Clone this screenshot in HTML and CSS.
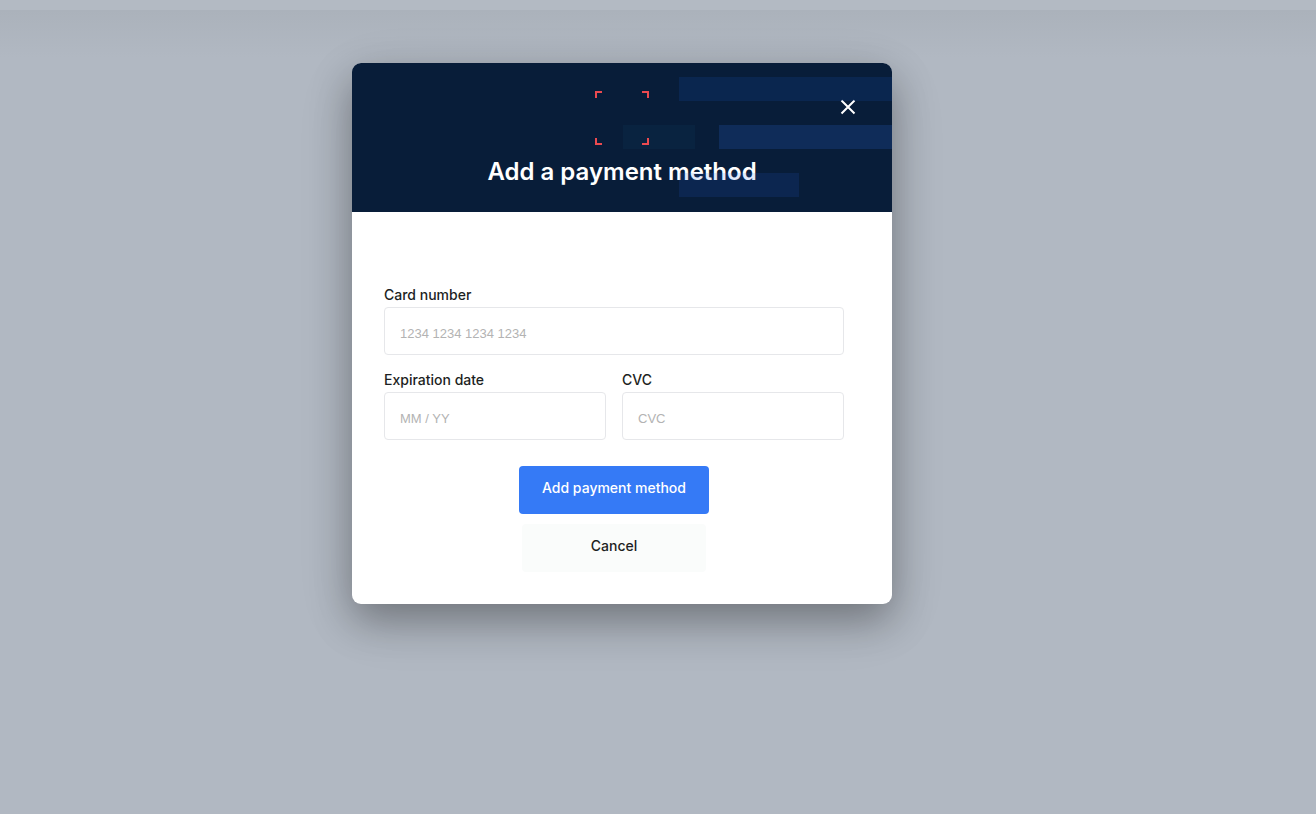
FILE: index.html
```html
<!DOCTYPE html>
<html lang="en">
<head>
  <meta charset="UTF-8" />
  <meta name="viewport" content="width=device-width, initial-scale=1.0"/>
  <title>Add a payment method</title>
  <link rel="stylesheet" href="styles.css">
</head>
<body>

  <div class="topbar"></div>

  <main class="page">
    <section class="modal" role="dialog" aria-labelledby="modalTitle">
      <header class="modal-header">
        <button type="button" class="close" aria-label="Close">
          <svg width="16" height="16" viewBox="0 0 16 16" fill="none" stroke="#ffffff" stroke-width="2">
            <path d="M1.5 1.5 14.5 14.5M14.5 1.5 1.5 14.5" />
          </svg>
        </button>
        <h2 id="modalTitle">Add a payment method</h2>

        <!-- Header artwork -->
        <svg class="artwork" width="297" height="149" viewBox="0 0 297 149" aria-hidden="true">
          <rect x="84" y="14" width="213" height="24" fill="#1650b0" fill-opacity="0.19" />
          <rect x="28" y="62" width="72" height="24" fill="#105a80" fill-opacity="0.11" />
          <rect x="124" y="62" width="173" height="24" fill="#2454b0" fill-opacity="0.27" />
          <rect x="84" y="110" width="120" height="24" fill="#2a64e0" fill-opacity="0.14" />
          <g fill="none" stroke="#ea4a50" stroke-width="2">
            <path d="M1 35V29H7" />
            <path d="M47 29H53V35" />
            <path d="M1 75V81H7" />
            <path d="M47 81H53V75" />
          </g>
        </svg>
      </header>

      <form class="payment-form">
        <div class="form-group">
          <label for="card">Card number</label>
          <input type="text" id="card" placeholder="1234 1234 1234 1234" />
        </div>

        <div class="form-row">
          <div class="form-group">
            <label for="expiry">Expiration date</label>
            <input type="text" id="expiry" placeholder="MM / YY" />
          </div>
          <div class="form-group">
            <label for="cvc">CVC</label>
            <input type="text" id="cvc" placeholder="CVC" />
          </div>
        </div>

        <div class="actions">
          <button type="submit" class="btn btn-primary">Add payment method</button>
          <button type="button" class="btn btn-cancel">Cancel</button>
        </div>
      </form>
    </section>
  </main>

</body>
</html>
```

FILE: styles.css
```css
* {
  box-sizing: border-box;
}

body {
  display: flex;
  flex-direction: column;
  min-height: 100vh;
  margin: 0;
  font-family: Inter, "Liberation Sans", sans-serif;
  color: #1d1f23;
  background-color: #b1b8c2;
}

.topbar {
  height: 10px;
  background-color: #b3bac3;
}

.page {
  flex: 1;
  padding: 53px 72px 53px 0;
  background: linear-gradient(#abb2bb, #b1b8c2 48px);
}

.modal {
  max-width: 540px;
  margin: 0 auto;
  border-radius: 9px;
  overflow: hidden;
  background-color: #ffffff;
  box-shadow: 0 16px 40px rgba(0, 0, 0, 0.32), 0 16px 64px rgba(0, 0, 0, 0.08);
}

.modal-header {
  position: relative;
  display: flex;
  flex-direction: column;
  padding: 32px 32px 24px;
  background-color: #081d39;
}

.modal-header h2 {
  margin: 32px 0 0;
  font-size: 24px;
  font-weight: 600;
  line-height: 32px;
  text-align: center;
  color: #ffffff;
}

/* sits over the title, tinting part of the text */
.artwork {
  position: absolute;
  top: 0;
  right: 0;
  pointer-events: none;
}

.close {
  align-self: flex-end;
  display: flex;
  width: 24px;
  height: 24px;
  margin-bottom: 5px;
  padding: 4px;
  border: 0;
  background: none;
  cursor: pointer;
}

.payment-form {
  padding: 72px 48px 32px 32px;
}

.form-row {
  display: grid;
  grid-template-columns: 1fr 1fr;
  gap: 16px;
  margin-top: 14px;
}

label {
  display: block;
  margin-bottom: 1px;
  font-size: 14px;
  font-weight: 500;
  line-height: 22px;
}

input {
  display: block;
  width: 100%;
  height: 48px;
  padding: 5px 15px 0;
  border: 1px solid #e6e7ea;
  border-radius: 4px;
  font-family: "Liberation Sans", Arial, sans-serif;
  font-size: 13px;
  background-color: #ffffff;
}

input::placeholder {
  color: #b3b3b3;
}

.actions {
  display: flex;
  flex-direction: column;
  align-items: center;
  gap: 10px;
  margin-top: 26px;
}

.btn {
  height: 48px;
  padding: 0 0 6px;
  border: 0;
  border-radius: 4px;
  font-family: inherit;
  font-size: 14px;
  font-weight: 500;
  cursor: pointer;
}

.btn-primary {
  width: 190px;
  color: #ffffff;
  background-color: #357af6;
}

.btn-cancel {
  width: 184px;
  color: #1d1f23;
  background-color: #fafcfb;
}
```
